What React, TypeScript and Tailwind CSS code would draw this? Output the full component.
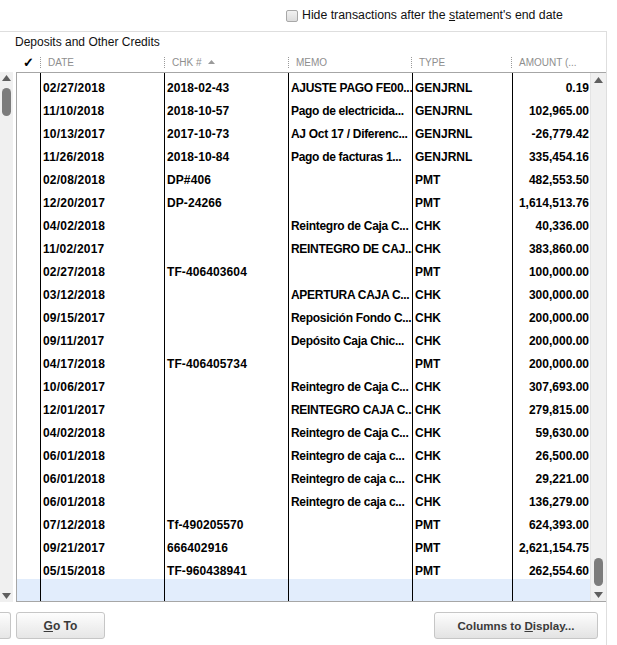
import React from 'react';

type Row = { date: string; chk: string; memo: string; type: string; amount: string };

const rows: Row[] = [
  { date: '02/27/2018', chk: '2018-02-43', memo: 'AJUSTE PAGO FE00...', type: 'GENJRNL', amount: '0.19' },
  { date: '11/10/2018', chk: '2018-10-57', memo: 'Pago de electricida...', type: 'GENJRNL', amount: '102,965.00' },
  { date: '10/13/2017', chk: '2017-10-73', memo: 'AJ Oct 17 / Diferenc...', type: 'GENJRNL', amount: '-26,779.42' },
  { date: '11/26/2018', chk: '2018-10-84', memo: 'Pago de facturas 1...', type: 'GENJRNL', amount: '335,454.16' },
  { date: '02/08/2018', chk: 'DP#406', memo: '', type: 'PMT', amount: '482,553.50' },
  { date: '12/20/2017', chk: 'DP-24266', memo: '', type: 'PMT', amount: '1,614,513.76' },
  { date: '04/02/2018', chk: '', memo: 'Reintegro de Caja C...', type: 'CHK', amount: '40,336.00' },
  { date: '11/02/2017', chk: '', memo: 'REINTEGRO DE CAJ...', type: 'CHK', amount: '383,860.00' },
  { date: '02/27/2018', chk: 'TF-406403604', memo: '', type: 'PMT', amount: '100,000.00' },
  { date: '03/12/2018', chk: '', memo: 'APERTURA CAJA C...', type: 'CHK', amount: '300,000.00' },
  { date: '09/15/2017', chk: '', memo: 'Reposición Fondo C...', type: 'CHK', amount: '200,000.00' },
  { date: '09/11/2017', chk: '', memo: 'Depósito Caja Chic...', type: 'CHK', amount: '200,000.00' },
  { date: '04/17/2018', chk: 'TF-406405734', memo: '', type: 'PMT', amount: '200,000.00' },
  { date: '10/06/2017', chk: '', memo: 'Reintegro de Caja C...', type: 'CHK', amount: '307,693.00' },
  { date: '12/01/2017', chk: '', memo: 'REINTEGRO CAJA C...', type: 'CHK', amount: '279,815.00' },
  { date: '04/02/2018', chk: '', memo: 'Reintegro de Caja C...', type: 'CHK', amount: '59,630.00' },
  { date: '06/01/2018', chk: '', memo: 'Reintegro de caja c...', type: 'CHK', amount: '26,500.00' },
  { date: '06/01/2018', chk: '', memo: 'Reintegro de caja c...', type: 'CHK', amount: '29,221.00' },
  { date: '06/01/2018', chk: '', memo: 'Reintegro de caja c...', type: 'CHK', amount: '136,279.00' },
  { date: '07/12/2018', chk: 'Tf-490205570', memo: '', type: 'PMT', amount: '624,393.00' },
  { date: '09/21/2017', chk: '666402916', memo: '', type: 'PMT', amount: '2,621,154.75' },
  { date: '05/15/2018', chk: 'TF-960438941', memo: '', type: 'PMT', amount: '262,554.60' },
];

const Up = () => (
  <svg width="9" height="6" viewBox="0 0 9 6"><path d="M4.5 0 L9 6 L0 6 Z" fill="#5f5f5f" /></svg>
);
const Down = () => (
  <svg width="9" height="6" viewBox="0 0 9 6"><path d="M0 0 L9 0 L4.5 6 Z" fill="#5f5f5f" /></svg>
);

const Sep = () => <div className="h-[11px] border-l border-dotted border-[#9a9a9a]" />;

const HeadCell = ({ w, label, extra }: { w: string; label: string; extra?: React.ReactNode }) => (
  <div className={`${w} flex items-center`}>
    <Sep />
    <span className="pl-[7px] text-[10px] text-[#8e8e8e] whitespace-nowrap">{label}</span>
    {extra}
  </div>
);

const App: React.FC = () => {
  return (
    <div className="w-[617px] h-[645px] bg-white overflow-hidden font-['Liberation_Sans',Arial,sans-serif] text-black">
      {/* top option */}
      <div className="h-[31px] flex items-center pl-[286px]">
        <div className="w-[12px] h-[12px] rounded-[2px] border border-[#a8a8a8] bg-gradient-to-b from-[#f2f2f2] to-[#dcdcdc]" />
        <span className="pl-[4px] text-[12.3px] text-[#111] leading-[14px] -mt-[1px]">
          Hide transactions after the <span className="underline">s</span>tatement's end date
        </span>
      </div>

      <div className="w-[607px] h-[614px] border-t border-r border-[#dedede] flex flex-col">
        <div className="h-[20px] pl-[15px] text-[12px] leading-[21px] text-[#111]">Deposits and Other Credits</div>

        {/* column headers */}
        <div className="h-[20px] pl-[16px] flex items-center">
          <div className="w-[24px] flex justify-center text-[13px] font-bold leading-none">✓</div>
          <HeadCell w="w-[124px]" label="DATE" />
          <HeadCell
            w="w-[124px]"
            label="CHK #"
            extra={
              <svg className="ml-[7px]" width="7" height="4" viewBox="0 0 7 4"><path d="M3.5 0 L7 4 L0 4 Z" fill="#9a9a9a" /></svg>
            }
          />
          <HeadCell w="w-[123px]" label="MEMO" />
          <HeadCell w="w-[100px]" label="TYPE" />
          <HeadCell w="w-[78px]" label="AMOUNT (..." />
        </div>

        {/* body */}
        <div className="flex h-[530px]">
          <div className="w-[13px] bg-[#f0f0f0] flex flex-col items-center pt-[3px]">
            <Up />
            <div className="mt-[7px] w-[9px] h-[28px] rounded-full bg-[#7c7c7c]" />
            <div className="flex-1" />
            <div className="pb-[3px]"><Down /></div>
          </div>
          <div className="w-[3px]" />
          <div className="flex-1 flex border border-[#a6a6a6] border-r-0">
            <div className="flex-1 flex flex-col text-[12px] font-bold">
              {rows.map((r, i) => (
                <div key={i} className="h-[23px] flex leading-[15px]">
                  <div className="w-[24px] border-r border-black" />
                  <div className="w-[124px] border-r border-black pl-[2px] pt-[8px] whitespace-nowrap tracking-[0.2px]">{r.date}</div>
                  <div className="w-[124px] border-r border-black pl-[2px] pt-[8px] whitespace-nowrap tracking-[0.1px]">{r.chk}</div>
                  <div className="w-[124px] border-r border-black pl-[2px] pt-[8px] whitespace-nowrap overflow-hidden tracking-[-0.3px]">{r.memo}</div>
                  <div className="w-[100px] border-r border-black pl-[2px] pt-[8px] whitespace-nowrap">{r.type}</div>
                  <div className="flex-1 pr-[1px] pt-[8px] text-right whitespace-nowrap">{r.amount}</div>
                </div>
              ))}
              <div className="flex-1 flex bg-[#e2edfc]">
                <div className="w-[24px] border-r border-black" />
                <div className="w-[124px] border-r border-black" />
                <div className="w-[124px] border-r border-black" />
                <div className="w-[124px] border-r border-black" />
                <div className="w-[100px] border-r border-black" />
                <div className="flex-1" />
              </div>
            </div>
            <div className="w-[16px] bg-[#f0f0f0] border-l border-[#e4e4e4] flex flex-col items-center pt-[4px]">
              <Up />
              <div className="flex-1" />
              <div className="w-[9px] h-[28px] rounded-full bg-[#7c7c7c]" />
              <div className="pt-[6px] pb-[3px]"><Down /></div>
            </div>
          </div>
        </div>

        {/* buttons */}
        <div className="mt-[10px] flex items-start">
          <div className="w-[11px] h-[27px] border border-l-0 border-[#c6c6c6] rounded-r-[3px] bg-gradient-to-b from-[#fdfdfd] to-[#e6e6e6]" />
          <div className="ml-[5px] w-[89px] h-[27px] border border-[#c6c6c6] rounded-[3px] bg-gradient-to-b from-[#fdfdfd] to-[#e6e6e6] flex items-center justify-center text-[12px] font-bold text-[#3a3a3a]">
            <span><span className="underline">G</span>o To</span>
          </div>
          <div className="flex-1" />
          <div className="mr-[8px] w-[164px] h-[27px] border border-[#c6c6c6] rounded-[3px] bg-gradient-to-b from-[#fdfdfd] to-[#e3e3e3] flex items-center justify-center text-[11.6px] font-bold text-[#3a3a3a]">
            <span>Columns to <span className="underline">D</span>isplay...</span>
          </div>
        </div>
      </div>
    </div>
  );
};

export default App;
